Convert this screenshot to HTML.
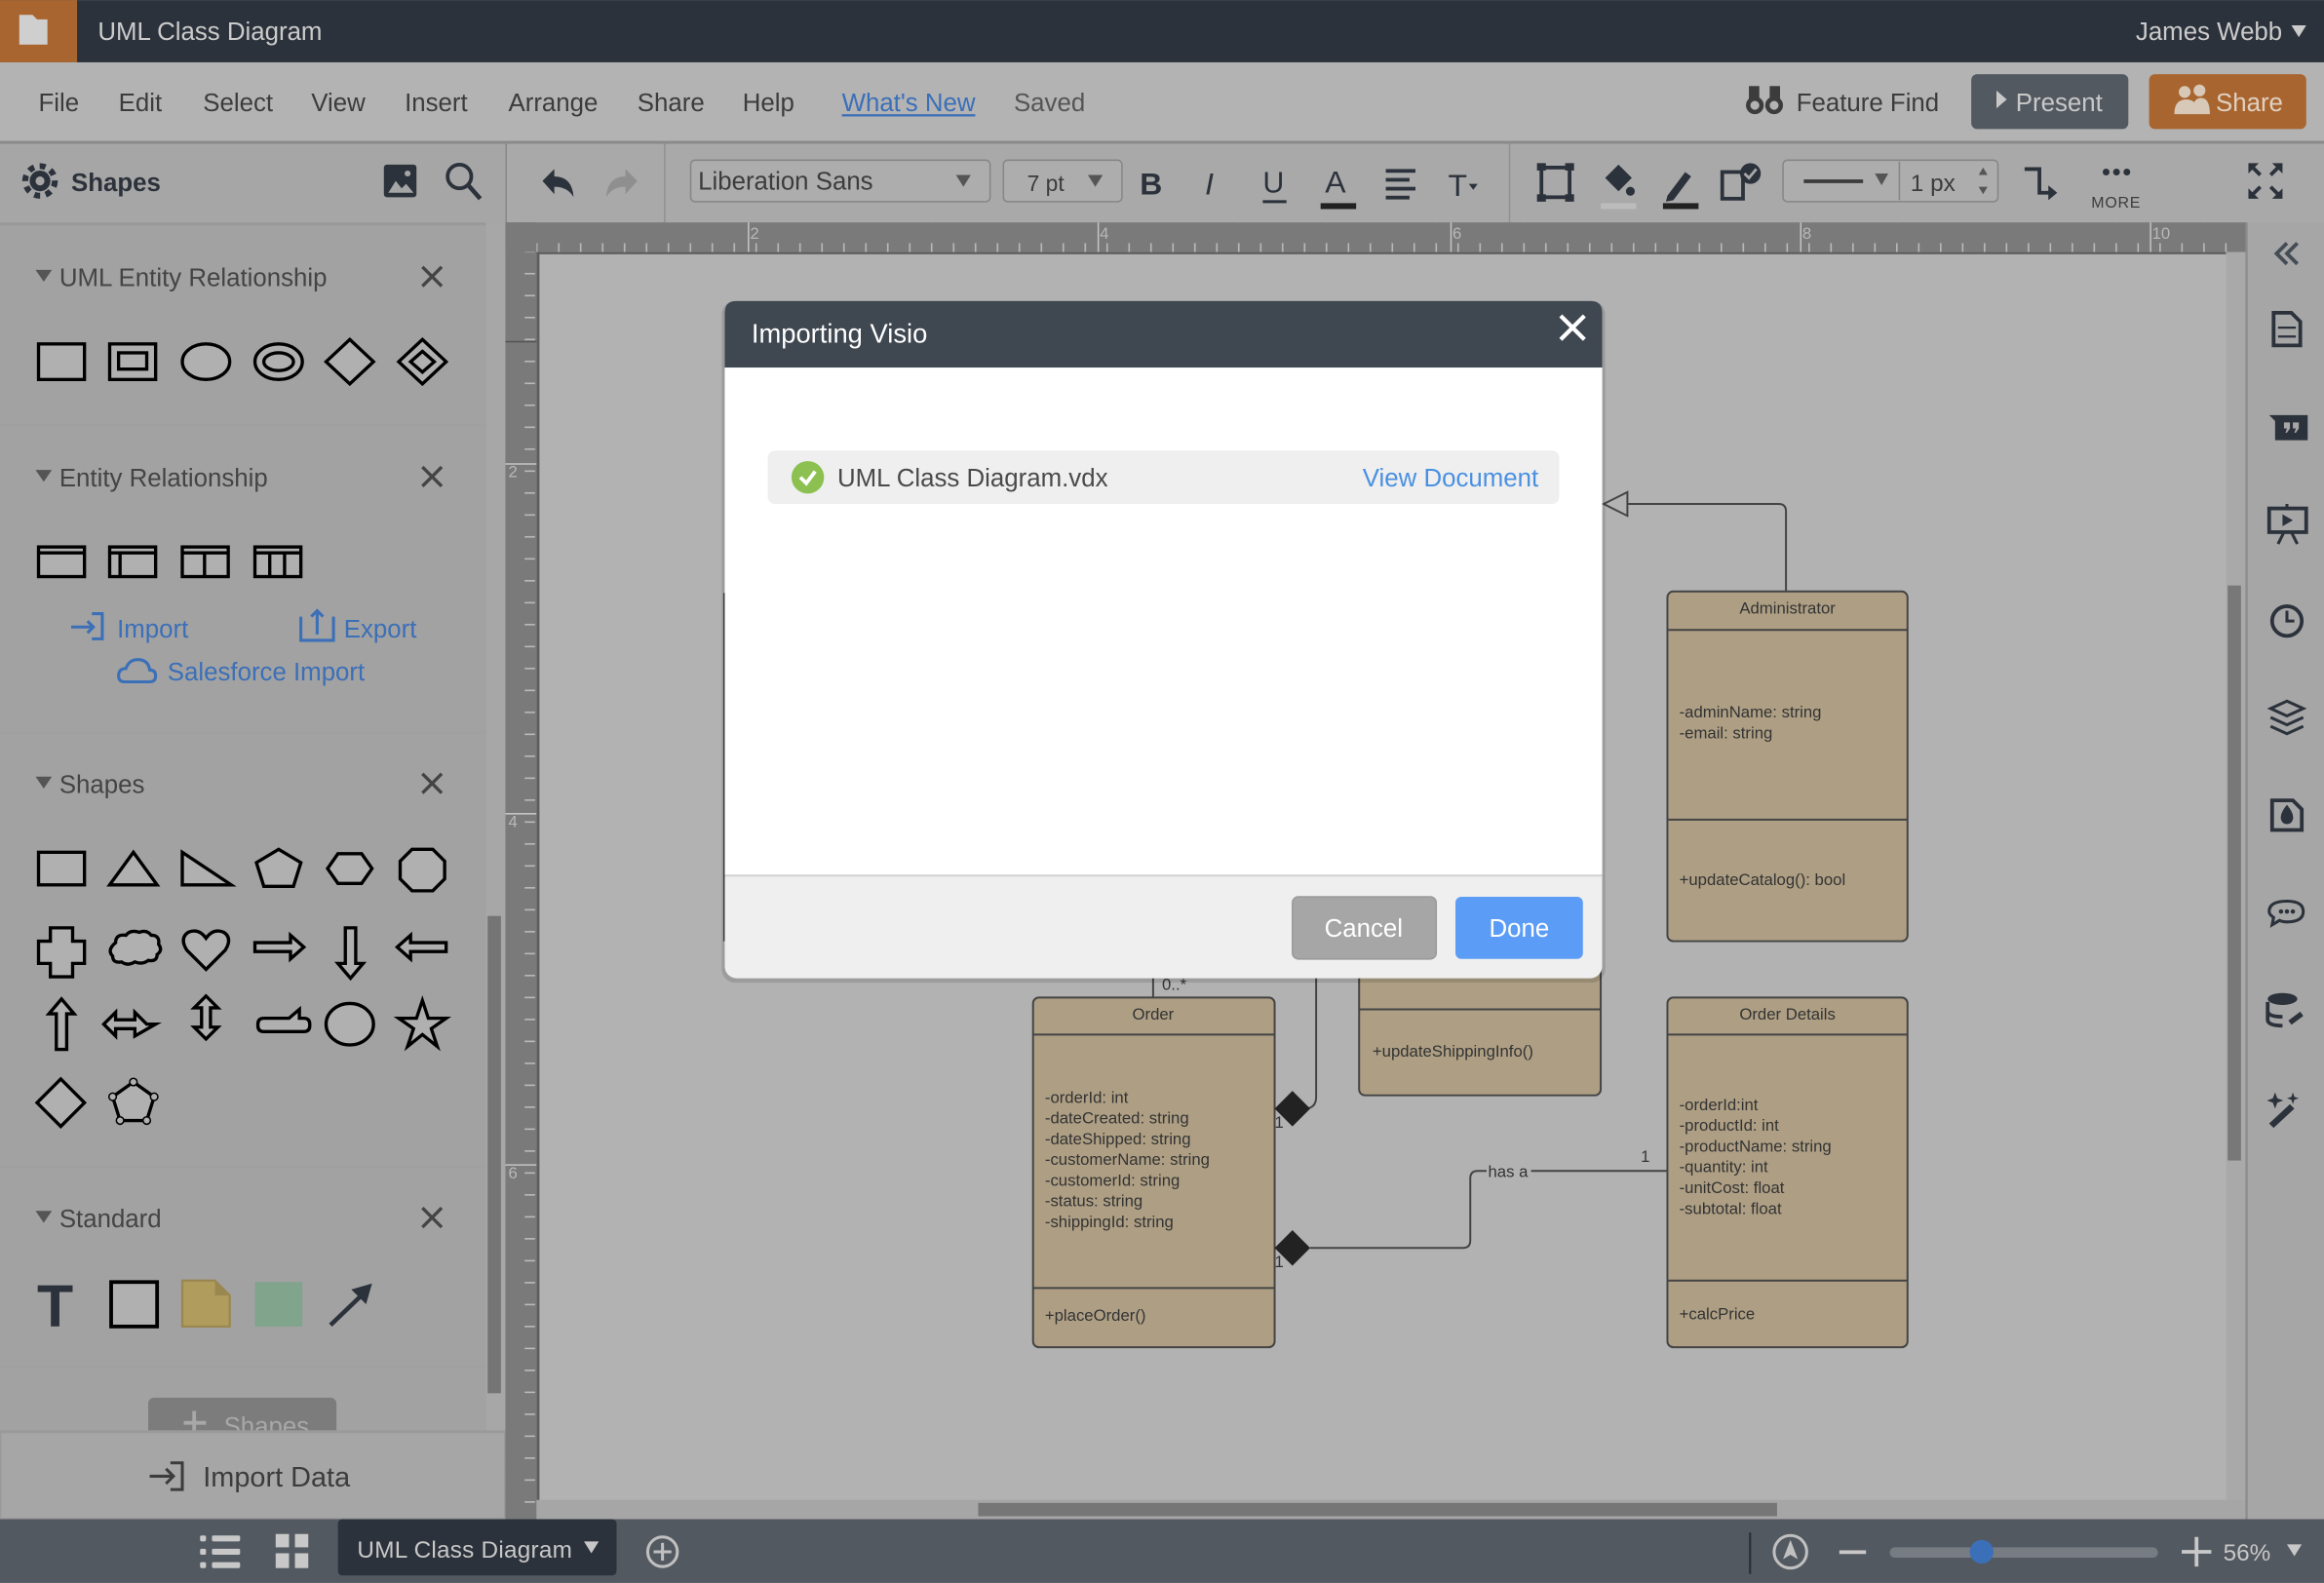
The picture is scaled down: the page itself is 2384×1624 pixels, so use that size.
<!DOCTYPE html>
<html><head><meta charset="utf-8"><style>
html,body{margin:0;padding:0;background:#b2b2b2;overflow:hidden}
svg{display:block}
text{font-family:"Liberation Sans",sans-serif}
</style></head><body>
<svg width="2384" height="1624" viewBox="0 0 1568 1068" xmlns="http://www.w3.org/2000/svg">
<defs>
<pattern id="rt" x="0" y="150" width="14.8" height="20" patternUnits="userSpaceOnUse"><line x1="7" y1="14" x2="7" y2="20" stroke="#bdbdbd" stroke-width="1"/></pattern>
<pattern id="rl" x="341" y="0" width="20" height="14.8" patternUnits="userSpaceOnUse"><line x1="13" y1="7" x2="20" y2="7" stroke="#bdbdbd" stroke-width="1"/></pattern>
</defs>
<!-- top bar -->
<rect x="0" y="0" width="1568" height="42" fill="#2c323b"/>
<rect x="0" y="0" width="52" height="42" fill="#a9652f"/>
<path d="M13 10 h9 l3 3 h7 v17 h-19z" fill="#cfcfcf"/>
<text x="66" y="27" font-size="17" fill="#cbcbcb">UML Class Diagram</text>
<text x="1441" y="27" font-size="17" fill="#cbcbcb">James Webb</text>
<path d="M1546 17 h10 l-5 8z" fill="#cbcbcb"/>
<!-- menubar -->
<rect x="0" y="42" width="1568" height="53" fill="#b3b3b3"/>
<rect x="0" y="95" width="1568" height="2" fill="#8a8a8a"/>
<g font-size="17" fill="#3c3c3c">
<text x="26" y="75">File</text><text x="80" y="75">Edit</text><text x="137" y="75">Select</text><text x="210" y="75">View</text><text x="273" y="75">Insert</text><text x="343" y="75">Arrange</text><text x="430" y="75">Share</text><text x="501" y="75">Help</text>
<text x="684" y="75" fill="#555">Saved</text>
<text x="1212" y="75">Feature Find</text>
</g>
<text x="568" y="75" font-size="17" fill="#3b6fb8">What's New</text>
<rect x="568" y="77" width="90" height="1.5" fill="#3b6fb8"/>
<g fill="#3c3c3c"><circle cx="1184" cy="71" r="6"/><circle cx="1197" cy="71" r="6"/><rect x="1180" y="58" width="7" height="10"/><rect x="1194" y="58" width="7" height="10"/></g>
<circle cx="1184" cy="71" r="3" fill="#b3b3b3"/><circle cx="1197" cy="71" r="3" fill="#b3b3b3"/>
<rect x="1330" y="50" width="106" height="37" rx="4" fill="#535961"/>
<path d="M1347 61 l7 6 l-7 6z" fill="#c8c8c8"/>
<text x="1360" y="75" font-size="17" fill="#c8c8c8">Present</text>
<rect x="1450" y="50" width="106" height="37" rx="4" fill="#a9652f"/>
<g fill="#d8c8b8"><circle cx="1474" cy="62" r="4"/><circle cx="1484" cy="61" r="4"/><path d="M1467 77 q0-10 8-10 q8 0 8 10z M1479 77 q0-11 6-11 q6 0 6 11z"/></g>
<text x="1495" y="75" font-size="17" fill="#e0d0c0">Share</text>
<!-- toolbar -->
<rect x="0" y="97" width="1568" height="53" fill="#a9a9a9"/>
<rect x="0" y="97" width="341" height="53" fill="#a6a6a6"/>
<rect x="341" y="97" width="1" height="53" fill="#888"/>
<rect x="448" y="97" width="1" height="53" fill="#919191"/>
<rect x="1018" y="97" width="1" height="53" fill="#919191"/>
<g fill="#2c323b">
<circle cx="27" cy="122" r="7"/><circle cx="27" cy="122" r="10" fill="none" stroke="#2c323b" stroke-width="4" stroke-dasharray="4 3.8"/>
</g>
<circle cx="27" cy="122" r="3" fill="#a6a6a6"/>
<text x="48" y="129" font-size="17" font-weight="bold" fill="#2c323b">Shapes</text>
<rect x="259" y="111" width="22" height="22" rx="2" fill="#2c323b"/><path d="M262 130 l5-8 l4 5 l3-3 l5 6z" fill="#a6a6a6"/><circle cx="275" cy="117" r="2" fill="#a6a6a6"/>
<circle cx="310" cy="119" r="8" fill="none" stroke="#2c323b" stroke-width="2.5"/><line x1="316" y1="125" x2="324" y2="134" stroke="#2c323b" stroke-width="3"/>
<path d="M366 122 l8-8 v5 q12 0 13 14 q-4-7-13-7 v5z" fill="#2c323b"/>
<path d="M430 122 l-8-8 v5 q-12 0-13 14 q4-7 13-7 v5z" fill="#8f8f8f"/>
<rect x="466" y="108" width="202" height="28" rx="3" fill="#adadad" stroke="#868686"/>
<text x="471" y="128" font-size="17" fill="#3c3c3c">Liberation Sans</text>
<path d="M645 118 h10 l-5 8z" fill="#555"/>
<rect x="677" y="108" width="80" height="28" rx="3" fill="#adadad" stroke="#868686"/>
<text x="693" y="129" font-size="15" fill="#3c3c3c">7 pt</text>
<path d="M734 118 h10 l-5 8z" fill="#555"/>
<text x="769" y="131" font-size="21" font-weight="bold" fill="#2c323b">B</text>
<text x="813" y="131" font-size="21" font-style="italic" font-family="Liberation Serif" fill="#2c323b">I</text>
<text x="852" y="130" font-size="20" fill="#2c323b">U</text><rect x="852" y="135" width="16" height="2" fill="#2c323b"/>
<text x="894" y="130" font-size="21" fill="#2c323b">A</text><rect x="891" y="137" width="24" height="4" fill="#222"/>
<g fill="#2c323b"><rect x="935" y="114" width="20" height="2.5"/><rect x="935" y="120" width="16" height="2.5"/><rect x="935" y="126" width="20" height="2.5"/><rect x="935" y="132" width="16" height="2.5"/></g>
<text x="977" y="132" font-size="21" fill="#2c323b">T</text><path d="M991 124 h6 l-3 4z" fill="#2c323b"/>
<rect x="1040" y="113" width="19" height="20" fill="none" stroke="#2c323b" stroke-width="2.5"/><g fill="#2c323b"><rect x="1037" y="110" width="6" height="5"/><rect x="1056" y="110" width="6" height="5"/><rect x="1037" y="131" width="6" height="5"/><rect x="1056" y="131" width="6" height="5"/></g>
<path d="M1083 120 l9-9 l9 9 l-9 9z" fill="#2c323b"/><circle cx="1100" cy="129" r="3" fill="#2c323b"/><rect x="1080" y="137" width="24" height="4" fill="#bcbcbc"/>
<path d="M1125 132 l12-16 l4 3 l-12 16 l-5 1z" fill="#2c323b"/><rect x="1122" y="137" width="24" height="4" fill="#222"/>
<rect x="1162" y="116" width="14" height="18" fill="none" stroke="#2c323b" stroke-width="2.5"/><circle cx="1181" cy="117" r="7" fill="#2c323b"/><path d="M1177 117 l3 3 l5-6" stroke="#a9a9a9" stroke-width="1.8" fill="none"/>
<rect x="1203" y="108" width="145" height="28" rx="3" fill="#adadad" stroke="#868686"/>
<rect x="1281" y="109" width="1" height="26" fill="#868686"/>
<rect x="1217" y="121" width="40" height="2.5" fill="#3c3c3c"/><path d="M1265 117 h9 l-4.5 8z" fill="#555"/>
<text x="1289" y="129" font-size="16" fill="#3c3c3c">1 px</text>
<path d="M1335 118 l3-5 l3 5z M1335 126 l3 5 l3-5z" fill="#555"/>
<path d="M1366 114 h10 v16 h8" stroke="#2c323b" stroke-width="2.5" fill="none"/><path d="M1382 125 l6 5 l-6 5z" fill="#2c323b"/>
<g fill="#2c323b"><circle cx="1421" cy="116" r="2.3"/><circle cx="1428" cy="116" r="2.3"/><circle cx="1435" cy="116" r="2.3"/></g>
<text x="1411" y="140" font-size="10.5" fill="#3c3c3c" letter-spacing="0.5">MORE</text>
<g stroke="#2c323b" stroke-width="2.5" fill="none"><path d="M1518 111 l7 7 M1539 111 l-7 7 M1518 133 l7-7 M1539 133 l-7-7"/></g>
<g fill="#2c323b"><path d="M1517 110 h7 l-7 7z M1540 110 h-7 l7 7z M1517 134 h7 l-7-7z M1540 134 h-7 l7-7z"/></g>
<!-- left panel -->
<rect x="0" y="150" width="341" height="875" fill="#a2a2a2"/>
<rect x="0" y="150" width="341" height="2" fill="#999"/>
<rect x="328" y="150" width="13" height="875" fill="#a7a7a7"/>
<rect x="329" y="618" width="9" height="322" fill="#757575"/>
<g font-size="17" fill="#444">
<text x="40" y="193">UML Entity Relationship</text>
<text x="40" y="328">Entity Relationship</text>
<text x="40" y="535">Shapes</text>
<text x="40" y="828">Standard</text>
</g>
<g fill="#555"><path d="M24 182 h11 l-5.5 8z"/><path d="M24 317 h11 l-5.5 8z"/><path d="M24 524 h11 l-5.5 8z"/><path d="M24 817 h11 l-5.5 8z"/></g>
<g stroke="#444" stroke-width="2.2"><path d="M285 180 l13 13 M298 180 l-13 13"/><path d="M285 315 l13 13 M298 315 l-13 13"/><path d="M285 522 l13 13 M298 522 l-13 13"/><path d="M285 815 l13 13 M298 815 l-13 13"/></g>
<g fill="#a0a0a0"><rect x="0" y="286" width="328" height="2"/><rect x="0" y="493" width="328" height="2"/><rect x="0" y="786" width="328" height="2"/><rect x="0" y="921" width="328" height="2"/></g>
<g fill="#b0b0b0" stroke="#000" stroke-width="2.2">
<rect x="26" y="232" width="31" height="24"/>
<rect x="74" y="232" width="31" height="24"/><rect x="80" y="238" width="19" height="11"/>
<ellipse cx="139" cy="244" rx="16" ry="12"/>
<ellipse cx="188" cy="244" rx="16" ry="12"/><ellipse cx="188" cy="244" rx="10" ry="6"/>
<path d="M236 229 l16 15 l-16 15 l-16-15z"/>
<path d="M285 229 l16 15 l-16 15 l-16-15z M285 237 l8 7 l-8 7 l-8-7z"/>
<rect x="26" y="369" width="31" height="20"/><line x1="26" y1="373" x2="57" y2="373"/>
<rect x="74" y="369" width="31" height="20"/><line x1="74" y1="373" x2="105" y2="373"/><line x1="81" y1="373" x2="81" y2="389"/>
<rect x="123" y="369" width="31" height="20"/><line x1="123" y1="373" x2="154" y2="373"/><line x1="138" y1="373" x2="138" y2="389"/>
<rect x="172" y="369" width="31" height="20"/><line x1="172" y1="373" x2="203" y2="373"/><line x1="182" y1="373" x2="182" y2="389"/><line x1="192" y1="373" x2="192" y2="389"/>
<rect x="26" y="575" width="31" height="22"/>
<path d="M74 597 l16-22 l16 22z"/>
<path d="M123 575 v22 h33z"/>
<path d="M188 573 l15 9 l-5 16 h-20 l-5-16z"/>
<path d="M228 576 h16 l7 10 l-7 10 h-16 l-7-10z"/>
<path d="M278 573 h14 l8 8 v12 l-8 8 h-14 l-8-8 v-12z"/>
<path d="M34 626 h15 v9 h8 v15 h-8 v9 h-15 v-9 h-8 v-15 h8z"/>
<path d="M78 636 q0-6 7-5 q3-4 9-2 q5-2 8 2 q6 0 5 6 q3 4-1 7 q0 5-6 4 q-4 3-9 1 q-5 3-9 0 q-6 1-6-4 q-4-4 2-9z"/>
<path d="M139 654 l-13-13 q-5-8 1-12 q7-3 12 4 q5-7 12-4 q6 4 1 12z"/>
<path d="M172 636 h24 v-5 l9 8 l-9 8 v-5 h-24z"/>
<path d="M233 626 h7 v24 h5 l-8.5 10 l-8.5-10 h5z"/>
<path d="M301 636 h-24 v-5 l-9 8 l9 8 v-5 h24z"/>
<path d="M38 708 v-24 h-5 l8.5-10 l8.5 10 h-5 v24z"/>
<path d="M113 691 h-6 l-8-8 v5 h-13 v-5 l-8 8 l8 8 v-5 h13 v5z" transform="translate(-8 0)"/>
<path d="M136 677 l-8 8 h5 v13 h-5 l8 8 l8-8 h-5 v-13 h5z" transform="translate(3 -5)"/>
<path d="M178 687 h17 l7-6 v6 h3 q4 0 4 4 v1 q0 4-4 4 h-27 q-4 0-4-4 v-1 q0-4 4-4z"/>
<ellipse cx="236" cy="691" rx="16" ry="14"/>
<path d="M285 675 l4 12 h12 l-10 7 l4 12 l-10-8 l-10 8 l4-12 l-10-7 h12z"/>
<path d="M41 728 l16 16 l-16 16 l-16-16z"/>
<path d="M90 730 l14 10 l-5 16 h-18 l-5-16z"/>
</g>
<g fill="#b0b0b0" stroke="#000" stroke-width="1"><circle cx="90" cy="730" r="2.5"/><circle cx="104" cy="740" r="2.5"/><circle cx="99" cy="756" r="2.5"/><circle cx="81" cy="756" r="2.5"/><circle cx="76" cy="740" r="2.5"/></g>
<text x="25" y="895" font-size="40" font-weight="bold" font-family="Liberation Serif" fill="#2c323b">T</text>
<rect x="75" y="865" width="31" height="30" fill="#b0b0b0" stroke="#000" stroke-width="2.5"/>
<path d="M123 864 h22 l10 10 v21 h-32z" fill="#b09d5d" stroke="#9a8850" stroke-width="1.5"/><path d="M145 864 v10 h10z" fill="#9a8850"/>
<rect x="172" y="865" width="32" height="30" fill="#80a48c"/>
<path d="M223 894 l23-22" stroke="#2c323b" stroke-width="3"/><path d="M251 866 l-4 14 l-10-10z" fill="#2c323b"/>
<g font-size="17" fill="#3b6fb8">
<text x="79" y="430">Import</text><text x="232" y="430">Export</text><text x="113" y="459">Salesforce Import</text>
</g>
<g stroke="#3b6fb8" stroke-width="2" fill="none">
<path d="M62 414 h7 v17 h-7 M48 423 h15 M59 419 l4 4 l-4 4"/>
<path d="M203 416 v16 h22 v-16 M214 428 v-15 M210 416 l4-4 l4 4"/>
<path d="M84 460 q-4 0-4-4 q0-5 5-5 q2-6 8-6 q7 0 8 7 q4 0 4 4 q0 4-4 4z"/>
</g>
<rect x="100" y="943" width="127" height="30" rx="4" fill="#7c7c7c"/>
<text x="151" y="968" font-size="17" fill="#a8a8a8">Shapes</text>
<path d="M131 952 v15 M124 960 h15" stroke="#a8a8a8" stroke-width="2.5"/>
<rect x="0" y="966" width="341" height="59" fill="#a6a6a6" stroke="#9a9a9a" stroke-width="2"/>
<text x="137" y="1003" font-size="19" fill="#3c3c3c">Import Data</text>
<path d="M115 987 h8 v18 h-8 M101 996 h16 M112 991 l5 5 l-5 5" stroke="#3c3c3c" stroke-width="2" fill="none"/>
<!-- rulers -->
<rect x="341" y="150" width="1175" height="20" fill="#7a7a7a"/>
<rect x="341" y="150" width="1175" height="20" fill="url(#rt)"/>
<rect x="341" y="150" width="21" height="875" fill="#7a7a7a"/>
<rect x="341" y="170" width="21" height="855" fill="url(#rl)"/>
<g font-size="11" fill="#b8b8b8"><text x="506" y="161">2</text><text x="742" y="161">4</text><text x="980" y="161">6</text><text x="1216" y="161">8</text><text x="1452" y="161">10</text>
<text x="343" y="322">2</text><text x="343" y="558">4</text><text x="343" y="795">6</text></g>
<g stroke="#c4c4c4"><line x1="505" y1="150" x2="505" y2="170"/><line x1="741" y1="150" x2="741" y2="170"/><line x1="979" y1="150" x2="979" y2="170"/><line x1="1215" y1="150" x2="1215" y2="170"/><line x1="1451" y1="150" x2="1451" y2="170"/>
<line x1="341" y1="313" x2="362" y2="313"/><line x1="341" y1="549" x2="362" y2="549"/><line x1="341" y1="786" x2="362" y2="786"/></g>
<rect x="341" y="230" width="21" height="1" fill="#555"/>
<!-- canvas -->
<rect x="362" y="170" width="1154" height="855" fill="#b2b2b2"/>
<rect x="362" y="170" width="2" height="855" fill="#5e5e5e"/>
<rect x="362" y="170" width="1140" height="1.5" fill="#5e5e5e"/>
<rect x="1502" y="170" width="14" height="842" fill="#a9a9a9"/>
<rect x="1503" y="395" width="9" height="388" fill="#787878"/>
<rect x="362" y="1012" width="1154" height="13" fill="#a6a6a6"/>
<rect x="660" y="1014" width="539" height="9" fill="#767676"/>
<!-- diagram -->
<g stroke="#444" stroke-width="1.3" fill="#ae9f84">
<rect x="1125" y="399" width="162" height="236" rx="4"/><line x1="1125" y1="425" x2="1287" y2="425"/><line x1="1125" y1="553" x2="1287" y2="553"/>
<rect x="697" y="673" width="163" height="236" rx="4"/><line x1="697" y1="698" x2="860" y2="698"/><line x1="697" y1="869" x2="860" y2="869"/>
<rect x="1125" y="673" width="162" height="236" rx="4"/><line x1="1125" y1="698" x2="1287" y2="698"/><line x1="1125" y1="864" x2="1287" y2="864"/>
<rect x="917" y="600" width="163" height="139" rx="4"/><line x1="917" y1="681" x2="1080" y2="681"/>
</g>
<rect x="488" y="400" width="4" height="235" fill="#444"/>
<g stroke="#444" stroke-width="1.3" fill="none">
<path d="M1205 399 v-54 q0-5-5-5 h-102"/>
<path d="M778 660 v13"/>
<path d="M888 655 v85 q0 8-8 8 h-8"/>
<path d="M884 842 h103 q5 0 5-5 v-42 q0-5 5-5 h128"/>
</g>
<path d="M1082 340 l16-8 v16z" fill="#b2b2b2" stroke="#444" stroke-width="1.3"/>
<path d="M860 748 l12-12 l12 12 l-12 12z M860 842 l12-12 l12 12 l-12 12z" fill="#222"/>
<rect x="1003" y="783" width="30" height="13" fill="#b2b2b2"/>
<g font-size="11" fill="#333">
<text x="1206" y="414" text-anchor="middle">Administrator</text>
<text x="1133" y="484">-adminName: string</text><text x="1133" y="498">-email: string</text>
<text x="1133" y="597">+updateCatalog(): bool</text>
<text x="778" y="688" text-anchor="middle">Order</text>
<text x="705" y="744">-orderId: int</text><text x="705" y="758">-dateCreated: string</text><text x="705" y="772">-dateShipped: string</text><text x="705" y="786">-customerName: string</text><text x="705" y="800">-customerId: string</text><text x="705" y="814">-status: string</text><text x="705" y="828">-shippingId: string</text>
<text x="705" y="891">+placeOrder()</text>
<text x="1206" y="688" text-anchor="middle">Order Details</text>
<text x="1133" y="749">-orderId:int</text><text x="1133" y="763">-productId: int</text><text x="1133" y="777">-productName: string</text><text x="1133" y="791">-quantity: int</text><text x="1133" y="805">-unitCost: float</text><text x="1133" y="819">-subtotal: float</text>
<text x="1133" y="890">+calcPrice</text>
<text x="926" y="713">+updateShippingInfo()</text>
<text x="1004" y="794">has a</text><text x="1107" y="784">1</text>
<text x="860" y="761">1</text><text x="860" y="855">1</text><text x="784" y="668">0..*</text>
</g>
<!-- dialog -->
<rect x="487" y="203" width="596" height="460" rx="9" fill="#000" opacity="0.12"/>
<rect x="489" y="203" width="592" height="457" rx="8" fill="#efefef"/>
<path d="M489 248 v-37 q0-8 8-8 h576 q8 0 8 8 v37z" fill="#3f4750"/>
<rect x="489" y="248" width="592" height="342" fill="#fff"/>
<rect x="489" y="590" width="592" height="1.5" fill="#d5d5d5"/>
<text x="507" y="231" font-size="18" fill="#fff">Importing Visio</text>
<path d="M1053 213 l16 16 M1069 213 l-16 16" stroke="#fff" stroke-width="2.8"/>
<rect x="518" y="304" width="534" height="36" rx="5" fill="#efefef"/>
<circle cx="545" cy="322" r="11" fill="#8cc152"/><path d="M540 322 l4 4 l6-8" stroke="#fff" stroke-width="2.5" fill="none"/>
<text x="565" y="328" font-size="17" fill="#4a4a4a">UML Class Diagram.vdx</text>
<text x="1038" y="328" font-size="17" fill="#4a90e2" text-anchor="end">View Document</text>
<rect x="872" y="605" width="97" height="42" rx="4" fill="#a6a6a6" stroke="#9a9a9a"/>
<text x="920" y="632" font-size="17" fill="#fff" text-anchor="middle">Cancel</text>
<rect x="982" y="605" width="86" height="42" rx="4" fill="#5b9cf6"/>
<text x="1025" y="632" font-size="17" fill="#fff" text-anchor="middle">Done</text>
<!-- right sidebar -->
<rect x="1516" y="150" width="52" height="875" fill="#a6a6a6"/>
<rect x="1515" y="150" width="1.5" height="875" fill="#8c8c8c"/>
<g fill="#2c323b" stroke="#2c323b">
<path d="M1543 164 l-7 7 l7 7 M1550 164 l-7 7 l7 7" stroke="#444c55" stroke-width="2.5" fill="none"/>
<path d="M1534 211 h12 l6 6 v16 h-18z" fill="none" stroke-width="2.5"/><path d="M1537 221 h12 M1537 227 h12" stroke-width="1.5"/>
<path d="M1531 280 h26 v17 h-22 v-13z" stroke="none"/>
<rect x="1531" y="343" width="25" height="16" fill="none" stroke-width="2.5"/><path d="M1540 347 l7 4 l-7 4z" stroke="none"/><path d="M1537 367 l4-8 M1550 367 l-4-8 M1543 340 v3" stroke-width="2"/>
<circle cx="1543" cy="419" r="10" fill="none" stroke-width="2.5"/><path d="M1543 412 v7 h5" fill="none" stroke-width="2"/>
<path d="M1532 478 l11-5 l11 5 l-11 5z M1532 484 l11 5 l11-5 M1532 490 l11 5 l11-5" fill="none" stroke-width="2"/>
<path d="M1533 540 h14 l6 6 v14 h-20z" fill="none" stroke-width="2.5"/><path d="M1543 543 q5 6 4 10 q-1 3-4 3 q-3 0-4-3 q-1-4 4-10z" stroke="none"/>
<path d="M1543 608 q11 0 11 7 q0 7-11 7 q-3 0-5-1 l-5 3 l1-5 q-3-2-3-4 q0-7 12-7z" fill="none" stroke-width="2"/>
<circle cx="1539" cy="615" r="1" /><circle cx="1543" cy="615" r="1"/><circle cx="1547" cy="615" r="1"/>
<ellipse cx="1540" cy="674" rx="10" ry="4" stroke="none"/><path d="M1530 676 v12 q0 4 10 4 M1530 682 q0 4 10 4" fill="none" stroke-width="2.5"/><path d="M1545 690 l8-6" stroke-width="3.5"/>
<path d="M1531 758 l14-13 l3 3 l-14 13z" stroke="none"/><path d="M1535 737 l1.5 4 l4 1.5 l-4 1.5 l-1.5 4 l-1.5-4 l-4-1.5 l4-1.5z M1547 737 l1 3 l3 1 l-3 1 l-1 3 l-1-3 l-3-1 l3-1z" stroke="none"/>
</g>
<path d="M1541 285 h4 v4 l-2 3 h-1 l1-3 h-2z M1547 285 h4 v4 l-2 3 h-1 l1-3 h-2z" fill="#a6a6a6"/>
<!-- bottom bar -->
<rect x="0" y="1025" width="1568" height="43" fill="#535961"/>
<g fill="#c8c8c8"><rect x="135" y="1036" width="4" height="4" rx="1"/><rect x="143" y="1036" width="19" height="4" rx="1"/><rect x="135" y="1045" width="4" height="4" rx="1"/><rect x="143" y="1045" width="19" height="4" rx="1"/><rect x="135" y="1054" width="4" height="4" rx="1"/><rect x="143" y="1054" width="19" height="4" rx="1"/>
<rect x="186" y="1035" width="9" height="9"/><rect x="199" y="1035" width="9" height="9"/><rect x="186" y="1048" width="9" height="10"/><rect x="199" y="1048" width="9" height="10"/></g>
<rect x="228" y="1025" width="188" height="38" rx="3" fill="#2c323b"/>
<text x="241" y="1051" font-size="16" fill="#c8c8c8" textLength="145">UML Class Diagram</text>
<path d="M394 1040 h10 l-5 8z" fill="#c8c8c8"/>
<circle cx="447" cy="1047" r="10" fill="none" stroke="#c0c0c0" stroke-width="2"/><path d="M447 1041 v12 M441 1047 h12" stroke="#c0c0c0" stroke-width="2"/>
<rect x="1180" y="1034" width="1.5" height="28" fill="#2c323b"/>
<circle cx="1208" cy="1047" r="11" fill="none" stroke="#c0c0c0" stroke-width="2"/><path d="M1208 1039 l5 13 l-5-3 l-5 3z" fill="#c0c0c0"/>
<rect x="1241" y="1046" width="18" height="2.5" fill="#c8c8c8"/>
<rect x="1275" y="1044" width="181" height="7" rx="3.5" fill="#777c82"/>
<ellipse cx="1337" cy="1047" rx="8" ry="8" fill="#3b6fb8"/>
<path d="M1482 1037 v20 M1472 1047 h20" stroke="#c8c8c8" stroke-width="2.5"/>
<text x="1500" y="1053" font-size="16" fill="#c8c8c8">56%</text>
<path d="M1543 1042 h10 l-5 8z" fill="#c8c8c8"/>
</svg>
</body></html>
